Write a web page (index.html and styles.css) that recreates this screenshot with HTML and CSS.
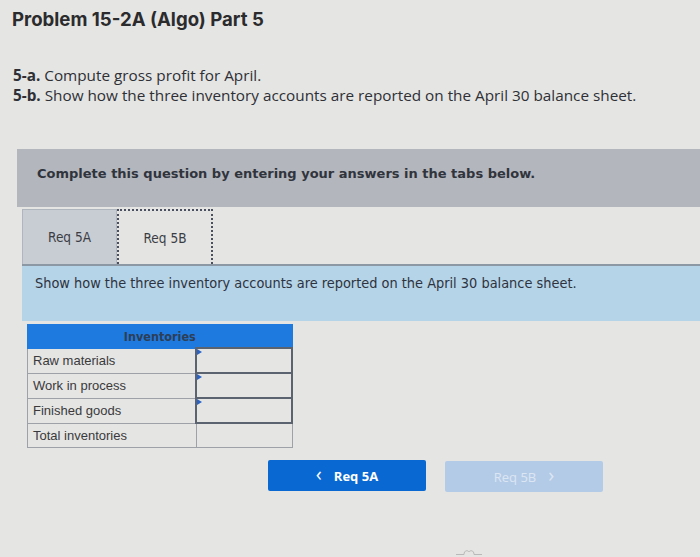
FILE: index.html
```html
<!DOCTYPE html>
<html>
<head>
<meta charset="utf-8">
<link rel="stylesheet" href="styles.css">
</head>
<body>
<div class="page">
  <h1 class="title">Problem 15-2A (Algo) Part 5</h1>
  <div class="parts">
    <p><b>5-a.</b> Compute gross profit for April.</p>
    <p><b>5-b.</b> Show how the three inventory accounts are reported on the April 30 balance sheet.</p>
  </div>
  <div class="question">
    <div class="banner">Complete this question by entering your answers in the tabs below.</div>
    <div class="tabs">
      <div class="tab">Req 5A</div>
      <div class="tab active">Req 5B</div>
    </div>
    <div class="instr">Show how the three inventory accounts are reported on the April 30 balance sheet.</div>
  </div>
  <table class="inv">
    <thead>
      <tr><th colspan="2">Inventories</th></tr>
    </thead>
    <tbody>
      <tr><td class="lbl">Raw materials</td><td class="inp"><span class="mark"></span></td></tr>
      <tr><td class="lbl">Work in process</td><td class="inp"><span class="mark"></span></td></tr>
      <tr><td class="lbl">Finished goods</td><td class="inp"><span class="mark"></span></td></tr>
      <tr><td class="lbl">Total inventories</td><td class="tot"></td></tr>
    </tbody>
  </table>
  <div class="nav">
    <button class="btn prev"><span class="chev">&lsaquo;</span>Req 5A</button>
    <button class="btn next">Req 5B<span class="chev">&rsaquo;</span></button>
  </div>
  <div class="foot">
    <svg width="26" height="6" viewBox="0 0 26 6"><path d="M0 5.5H8M18 5.5H26M8 5.5C8 1 12 1 13 3C14 1 18 1 18 5.5" fill="none" stroke="#b9b9b9" stroke-width="1"/></svg>
  </div>
</div>
</body>
</html>
```
FILE: styles.css
```css
html, body {
  margin: 0;
  padding: 0;
}
body {
  background: #e5e5e3;
  width: 700px;
  height: 557px;
  overflow: hidden;
}
.page {
  padding-top: 9px;
}
.title {
  margin: 0 0 0 12px;
  font-family: Inter, "Liberation Sans", Arial, sans-serif;
  font-weight: 700;
  font-size: 18.6px;
  line-height: 20px;
  color: #2b2b2d;
}
.parts {
  margin: 36px 0 0 13px;
  font-family: "Open Sans", "Liberation Sans", sans-serif;
  font-size: 15.3px;
  color: #2e3036;
}
.parts p {
  margin: 0;
  line-height: 20px;
}
.parts b {
  font-weight: 700;
}
.question {
  margin: 44px 0 0 17px;
}
.banner {
  background: #b4b6bd;
  height: 58px;
  box-sizing: border-box;
  padding: 17px 0 0 20px;
  font-family: "DejaVu Sans", Verdana, sans-serif;
  font-weight: 700;
  font-size: 13px;
  line-height: 16px;
  color: #30343c;
}
.tabs {
  display: flex;
  margin: 2px 0 0 5px;
  border-bottom: 2px solid #8c98a4;
}
.tab {
  width: 95px;
  height: 55px;
  box-sizing: border-box;
  display: flex;
  align-items: center;
  justify-content: center;
  font-family: "DejaVu Sans Condensed", "DejaVu Sans", sans-serif;
  font-size: 13.5px;
  color: #3a3d44;
  background: #c8ccd3;
  border: 1px solid #b0b6be;
  border-bottom: none;
}
.tab.active {
  background: #e4e4e2;
  border: 2px dotted #4a5060;
  border-bottom: none;
  width: 96px;
}
.instr {
  margin-left: 5px;
  background: #b6d4e7;
  height: 55px;
  box-sizing: border-box;
  padding: 9px 0 0 13px;
  font-family: "DejaVu Sans Condensed", "DejaVu Sans", sans-serif;
  font-size: 14.4px;
  color: #2d3340;
}
.inv {
  margin: 3px 0 0 27px;
  border-collapse: collapse;
  width: 266px;
  font-family: "Liberation Sans", Arial, sans-serif;
  font-size: 13px;
  color: #3a3a3c;
}
.inv th {
  background: #1f7ae0;
  color: #2d3e55;
  font-family: "DejaVu Sans Condensed", "DejaVu Sans", sans-serif;
  font-weight: 700;
  font-size: 12.5px;
  height: 22px;
  padding: 0;
  text-align: center;
  border: 1px solid #1f7ae0;
}
.inv td {
  height: 23px;
  padding: 0;
  border: 1px solid #9ea2a8;
}
.inv td.lbl {
  width: 162px;
  padding-left: 5px;
}
.inv td.inp {
  position: relative;
  border: 2px solid #5b6270;
}
.mark {
  position: absolute;
  left: 0;
  top: 0;
  width: 0;
  height: 0;
  border-top: 3px solid transparent;
  border-bottom: 3px solid transparent;
  border-left: 5px solid #2a63c5;
}
.inv td.tot {
  border: 1px solid #9ea2a8;
}
.nav {
  display: flex;
  gap: 19px;
  margin: 12px 0 0 268px;
}
.btn {
  width: 158px;
  height: 31px;
  border: none;
  border-radius: 2px;
  display: flex;
  align-items: center;
  justify-content: center;
  font-family: "Open Sans", "Liberation Sans", sans-serif;
  font-size: 13px;
  font-weight: 700;
  padding: 0;
}
.btn.prev {
  background: #0a68d3;
  color: #ffffff;
}
.btn.next {
  background: #b4cbe7;
  color: #dce6f3;
  font-weight: 400;
  margin-top: 1px;
}
.chev {
  font-size: 20px;
  font-weight: 400;
  line-height: 1;
  margin: -3px 12px 0 0;
}
.btn.next .chev {
  margin: -3px 0 0 12px;
}
.foot {
  margin: 57px 0 0 456px;
  height: 6px;
}
.foot svg {
  display: block;
}
```
